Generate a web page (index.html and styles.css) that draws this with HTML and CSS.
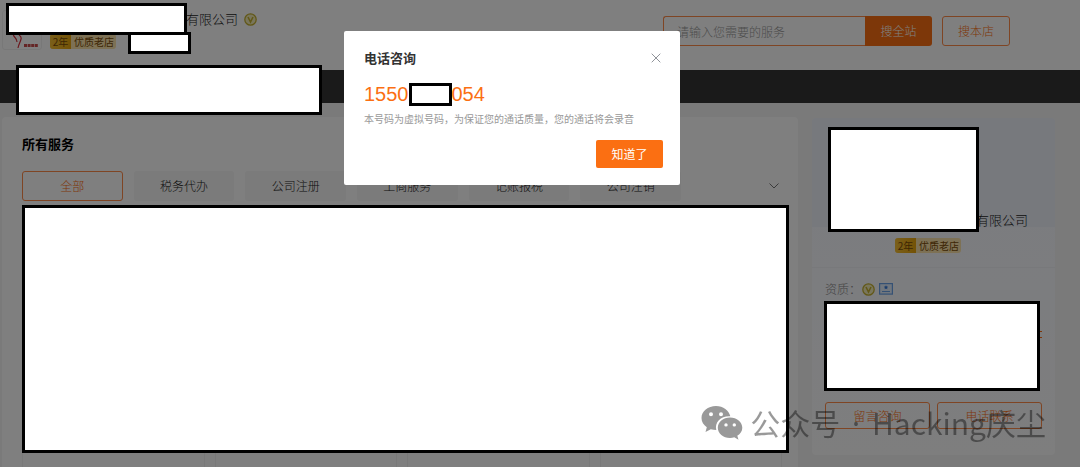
FILE: index.html
```html
<!DOCTYPE html>
<html lang="zh-CN">
<head>
  <meta charset="utf-8">
  <title>电话咨询</title>
  <link rel="stylesheet" href="styles.css">
</head>
<body>
  <!-- 店铺头部 -->
  <header class="header">
    <div class="shop">
      <div class="shop-logo">
        <svg width="40" height="40" viewBox="0 0 40 40" fill="none">
          <path d="M10 22c0 5 4 4 4 9M16 24c5 3 0 7-1 13" stroke="#d8303c" stroke-width="1.2"/>
          <path d="M21 34.500h14" stroke="#c84a4a" stroke-width="3" stroke-dasharray="3 .6"/>
        </svg>
      </div>
      <div class="shop-info">
        <div class="shop-name">有限公司
          <svg width="13" height="13" viewBox="0 0 13 13" fill="none" stroke="#c4b030">
            <circle cx="6.500" cy="6.500" r="5.700" stroke-width="1.300" fill="#f2ecb8"/>
            <path d="M4 4l2.500 5L9 4" stroke-width="1.600"/>
          </svg>
        </div>
        <div class="tag"><span class="tag-year">2年</span><span class="tag-text">优质老店</span></div>
      </div>
      <span class="mask mask-name"></span>
      <span class="mask mask-score"></span>
    </div>
    <form class="search">
      <input type="text" class="search-input" placeholder="请输入您需要的服务" aria-label="搜索服务">
      <button type="button" class="search-all">搜全站</button>
      <button type="button" class="search-shop">搜本店</button>
    </form>
  </header>

  <nav class="nav"><span class="mask mask-nav"></span></nav>

  <div class="container">
    <!-- 所有服务 -->
    <main class="panel">
      <h2 class="panel-title">所有服务</h2>
      <div class="filter">
        <div class="tabs">
          <button type="button" class="tab active">全部</button>
          <button type="button" class="tab">税务代办</button>
          <button type="button" class="tab">公司注册</button>
          <button type="button" class="tab">工商服务</button>
          <button type="button" class="tab">记账报税</button>
          <button type="button" class="tab">公司注销</button>
        </div>
        <button type="button" class="more" aria-label="展开">
          <svg width="10" height="6" viewBox="0 0 10 6" fill="none" stroke="#777"><path d="M.5.5L5 5 9.500.5"/></svg>
        </button>
      </div>
      <div class="services">
        <div class="service"></div>
        <div class="service"></div>
        <div class="service"></div>
        <div class="service"></div>
        <span class="mask mask-services"></span>
      </div>
    </main>

    <!-- 店铺信息 -->
    <aside class="side">
      <div class="side-cover">
        <div class="side-name">有限公司</div>
        <span class="mask mask-avatar"></span>
      </div>
      <div class="side-tag">
        <div class="tag"><span class="tag-year">2年</span><span class="tag-text">优质老店</span></div>
      </div>
      <div class="side-cert">
        <span>资质：</span>
        <svg width="13" height="13" viewBox="0 0 13 13" fill="none" stroke="#c4b030">
          <circle cx="6.500" cy="6.500" r="5.700" stroke-width="1.300" fill="#f2ecb8"/>
          <path d="M4 4l2.500 5L9 4" stroke-width="1.600"/>
        </svg>
        <svg width="14" height="12" viewBox="0 0 14 12" fill="none" stroke="#6ba3e8">
          <rect x=".6" y=".6" width="12.800" height="10.500" stroke-width="1.200" fill="#e3eefc"/>
          <path d="M3 8.500h8"/>
          <path d="M7 2.200l.7 1.300 1.500.2-1.100 1.100.2 1.500L7 5.600l-1.300.7.2-1.500-1.100-1.100 1.500-.2z" fill="#3478d8" stroke="none"/>
        </svg>
      </div>
      <div class="side-detail">
        <span class="detail-edge"></span>
        <span class="mask mask-detail"></span>
      </div>
      <div class="side-actions">
        <button type="button" class="btn-line">留言咨询</button>
        <button type="button" class="btn-line">电话联系</button>
      </div>
    </aside>
  </div>

  <!-- 电话咨询弹窗 -->
  <div class="overlay"></div>
  <div class="dialog" role="dialog" aria-labelledby="dialogTitle">
    <div class="dialog-header">
      <h3 class="dialog-title" id="dialogTitle">电话咨询</h3>
      <button type="button" class="dialog-close" aria-label="关闭">
        <svg width="10" height="10" viewBox="0 0 10 10" stroke="#909399"><path d="M.7.7l8.600 8.600M9.300.7L.7 9.300"/></svg>
      </button>
    </div>
    <div class="phone"><span>1550</span><span class="phone-mask"></span><span>054</span></div>
    <p class="hint">本号码为虚拟号码，为保证您的通话质量，您的通话将会录音</p>
    <div class="dialog-footer">
      <button type="button" class="btn-primary">知道了</button>
    </div>
  </div>

  <div class="watermark">
    <svg width="42" height="36" viewBox="0 0 42 36">
      <path fill-rule="evenodd" d="M15 1C7 1 .5 6.300.5 13c0 3.800 2 7 5.300 9.200L4.500 27l5.300-2.700c1.700.5 3.500.8 5.500.8-2-8 5-14.400 14-13.800C28 5.300 22.200 1 15 1zM10 7.200a2 2 0 110 4 2 2 0 010-4zm10 0a2 2 0 110 4 2 2 0 010-4z"/>
      <path fill-rule="evenodd" d="M29 12.500c-6.800 0-12.200 4.600-12.200 10.300S22.200 33 29 33c1.500 0 3-.2 4.300-.7l4.200 2.400-1.200-3.900c3.100-1.900 5-4.700 5-8 0-5.700-5.500-10.300-12.300-10.300zM25 18.200a1.700 1.700 0 110 3.400 1.700 1.700 0 010-3.400zm8.300 0a1.700 1.700 0 110 3.400 1.700 1.700 0 010-3.400z"/>
    </svg>
    <div>公众号<span class="dot"> · </span>Hacking庆尘</div>
  </div>
</body>
</html>
```
FILE: styles.css
```css
:root {
  --orange: #fb6f12;
  --line: #ff8a48;
}

* {
  box-sizing: border-box;
}

body {
  margin: 0;
  position: relative;
  background: #f4f4f4;
  color: #222;
  font-family: "Noto Sans CJK SC", sans-serif;
  font-size: 12px;
  font-weight: 300;
  line-height: 16px;
}

button,
input {
  font: inherit;
  padding: 0;
}

button {
  cursor: pointer;
}

svg {
  display: block;
  flex-shrink: 0;
}

/* 遮挡块，位于蒙层之上 */
.mask {
  position: absolute;
  z-index: 20;
  background: #fff;
  border: 3px solid #000;
}

/* 头部 */
.header {
  display: flex;
  justify-content: space-between;
  align-items: flex-start;
  height: 70px;
  padding: 10px 70px 0 2px;
  background: #fff;
}

.shop {
  position: relative;
  display: flex;
  gap: 8px;
}

.shop-logo {
  width: 40px;
  height: 40px;
  border: 1px solid #f0f0f0;
  border-radius: 3px;
}

.shop-name {
  display: flex;
  align-items: center;
  gap: 6px;
  height: 18px;
  margin-left: 136px;
  font-size: 13px;
}

.shop-info .tag {
  margin-top: 6px;
}

.mask-name {
  left: 4px;
  top: -7px;
  width: 181px;
  height: 32px;
}

.mask-score {
  left: 126px;
  top: 22px;
  width: 63px;
  height: 22px;
}

.tag {
  display: inline-flex;
  height: 15px;
  border-radius: 3px;
  overflow: hidden;
  background: #fbe3aa;
  color: #7a4c08;
  font-size: 10px;
  font-weight: 400;
  line-height: 15px;
}

.tag-year {
  width: 21px;
  text-align: center;
  background: linear-gradient(90deg, #f5bf35, #e8a50c);
}

.tag-text {
  padding: 0 2px 0 3px;
}

.search {
  display: flex;
  margin-top: 6px;
}

.search-input {
  width: 202px;
  height: 30px;
  padding-left: 13px;
  border: 1px solid var(--line);
  border-right: none;
  border-radius: 3px 0 0 3px;
  background: #fff;
  outline: none;
}

.search-input::placeholder {
  color: #999;
}

.search-all {
  width: 67px;
  border: none;
  border-radius: 0 3px 3px 0;
  background: var(--orange);
  color: #fff;
}

.search-shop {
  width: 68px;
  margin-left: 10px;
  border: 1px solid var(--line);
  border-radius: 3px;
  background: #fff;
  color: var(--orange);
}

.nav {
  position: relative;
  height: 33px;
  background: #343434;
}

.mask-nav {
  left: 16px;
  top: -5px;
  width: 306px;
  height: 50px;
}

/* 主体 */
.container {
  display: flex;
  align-items: flex-start;
  gap: 14px;
  padding: 14px 25px 0 2px;
}

.panel {
  flex: 1;
  padding: 18px 16px 0 20px;
  border-radius: 4px 4px 0 0;
  background: #fff;
}

.panel-title {
  margin: 0 0 18px;
  color: #000;
  font-size: 13px;
  font-weight: 700;
  line-height: 18px;
}

.filter {
  display: flex;
}

.tabs {
  flex: 1;
  display: grid;
  grid-template-columns: repeat(6, 1fr);
  gap: 11px;
}

.tab {
  height: 30px;
  border: none;
  border-radius: 3px;
  background: #f6f6f6;
  color: #222;
}

.tab.active {
  border: 1px solid var(--line);
  background: #fff;
  color: var(--orange);
}

.more {
  display: flex;
  justify-content: flex-end;
  align-items: center;
  width: 101px;
  padding-right: 3px;
  border: none;
  background: none;
}

.services {
  position: relative;
  display: grid;
  grid-template-columns: repeat(4, 1fr);
  gap: 10px;
  margin-top: 10px;
}

.service {
  height: 256px;
  border: 1px solid #f3f3f3;
  border-bottom: none;
  border-radius: 3px 3px 0 0;
}

.mask-services {
  left: 0;
  right: -7px;
  top: -6px;
  height: 248px;
}

/* 侧栏 */
.side {
  width: 243px;
  margin-top: 1px;
  padding-bottom: 26px;
  border-radius: 4px;
  background: linear-gradient(#f5f8ff, #fcfcfd);
}

.side-cover {
  position: relative;
  height: 109px;
  padding: 94px 27px 0 0;
  border-radius: 4px 4px 0 0;
  background: #eef2fa;
  text-align: right;
}

.side-name {
  font-size: 13px;
}

.mask-avatar {
  left: 16px;
  top: 9px;
  width: 151px;
  height: 105px;
}

.side-tag {
  height: 41px;
  padding: 10px 0 0 83px;
  border-bottom: 1px solid #f0f2f6;
}

.side-cert {
  display: flex;
  align-items: center;
  gap: 4px;
  margin: 13px 0 0 13px;
  color: #888;
}

.side-cert span {
  width: 33px;
  white-space: nowrap;
}

.side-detail {
  position: relative;
  height: 105px;
  padding: 34px 13px 0;
}

.detail-edge {
  display: block;
  width: 3px;
  height: 7px;
  margin-left: auto;
  border: solid var(--orange);
  border-width: 1px 0;
}

.mask-detail {
  left: 12px;
  right: 15px;
  top: 4px;
  height: 90px;
}

.side-actions {
  display: flex;
  gap: 7px;
  padding: 0 13px;
}

.btn-line {
  flex: 1;
  height: 27px;
  border: 1px solid var(--line);
  border-radius: 3px;
  background: none;
  color: var(--orange);
}

/* 弹窗 */
.overlay {
  position: fixed;
  inset: 0;
  z-index: 10;
  background: rgba(0, 0, 0, 0.5);
}

.dialog {
  position: fixed;
  z-index: 30;
  top: 31px;
  left: 0;
  right: 56px;
  width: 336px;
  margin: 0 auto;
  padding: 18px 17px 17px 20px;
  border-radius: 2px;
  background: #fff;
}

.dialog-header {
  display: flex;
  justify-content: space-between;
  align-items: center;
}

.dialog-title {
  margin: 0;
  color: #333;
  font-size: 13px;
  font-weight: 700;
  line-height: 18px;
}

.dialog-close {
  display: flex;
  margin-right: 2px;
  border: none;
  background: none;
}

.phone {
  display: flex;
  align-items: center;
  height: 24px;
  margin-top: 15px;
  color: var(--orange);
  font-family: "Liberation Sans", sans-serif;
  font-size: 20px;
  line-height: 24px;
}

.phone-mask {
  width: 43px;
  height: 23px;
  border: 3px solid #000;
}

.hint {
  margin: 5px 0 0;
  color: #999;
  font-size: 10px;
  font-weight: 400;
  line-height: 16px;
}

.dialog-footer {
  display: flex;
  justify-content: flex-end;
  margin-top: 13px;
}

.btn-primary {
  width: 67px;
  height: 28px;
  border: none;
  border-radius: 2px;
  background: var(--orange);
  color: #fff;
  font-weight: 400;
}

/* 水印 */
.watermark {
  position: absolute;
  z-index: 40;
  right: 34px;
  bottom: 23px;
  display: flex;
  align-items: center;
  gap: 7px;
  color: rgba(0, 0, 0, 0.4);
  font-size: 30px;
  font-weight: 400;
  line-height: 40px;
  white-space: nowrap;
}

.watermark .dot {
  padding: 0 4px;
  font-family: "Noto Sans", sans-serif;
}

.watermark svg {
  fill: #999;
}
```
